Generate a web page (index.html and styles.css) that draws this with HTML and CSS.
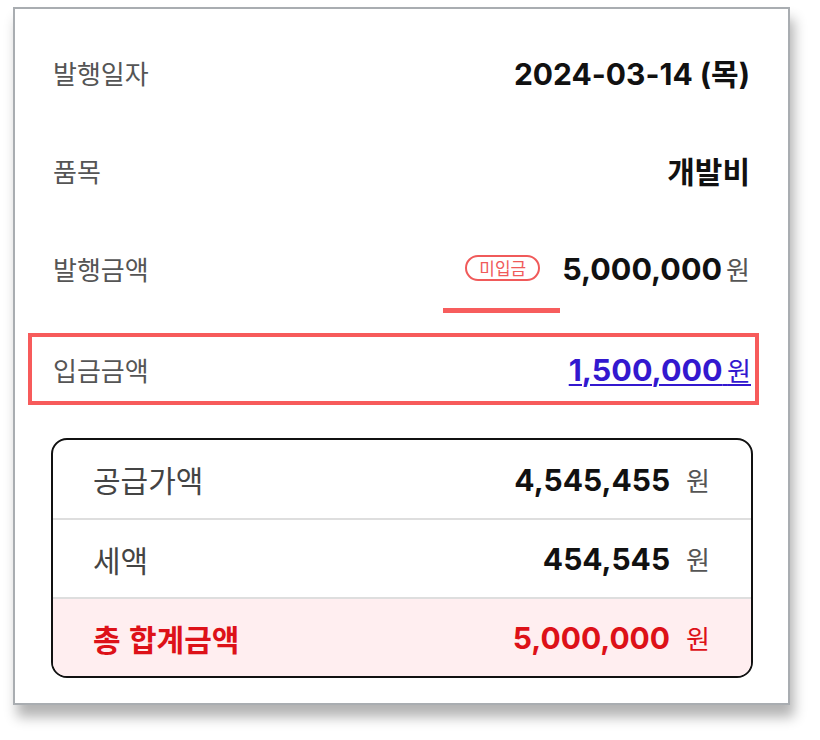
FILE: index.html
```html
<!DOCTYPE html>
<html lang="ko">
    <head>
        <meta charset="UTF-8">
        <title>세금계산서 상세</title>
        <link rel="stylesheet" href="styles.css">
    </head>
    <body>
        <main class="tarjeta">
            <div class="fila">
                <span class="etiqueta">발행일자</span>
                <span class="valor">2024-03-14 (목)</span>
            </div>
            <div class="fila">
                <span class="etiqueta">품목</span>
                <span class="valor">개발비</span>
            </div>
            <div class="fila">
                <span class="etiqueta">발행금액</span>
                <span class="monto">
                    <span class="insignia">미입금</span>
                    <span class="barra"></span>
                    <span class="numero">5,000,000</span>
                    <span class="won">원</span>
                </span>
            </div>
            <div class="fila destacada">
                <span class="etiqueta">입금금액</span>
                <a href="#" class="enlace"><span class="numero">1,500,000</span> <span class="won">원</span></a>
            </div>
            <section class="tabla">
                <div class="fila-tabla">
                    <span class="etiqueta-tabla">공급가액</span>
                    <span><span class="numero-tabla">4,545,455</span><span class="won-tabla">원</span></span>
                </div>
                <div class="fila-tabla">
                    <span class="etiqueta-tabla">세액</span>
                    <span><span class="numero-tabla">454,545</span><span class="won-tabla">원</span></span>
                </div>
                <div class="fila-tabla total">
                    <span class="etiqueta-tabla">총 합계금액</span>
                    <span><span class="numero-tabla">5,000,000</span><span class="won-tabla">원</span></span>
                </div>
            </section>
        </main>
    </body>
</html>
```
FILE: styles.css
```css
* {
    box-sizing: border-box;
}
body {
    margin: 0;
    padding: 7px 0 35px 13px;
    background: #ffffff;
    font-family: "Noto Sans CJK KR", "Noto Sans", sans-serif;
}
.tarjeta {
    width: 777px;
    height: 698px;
    border: 2px solid #a9adb1;
    background: #ffffff;
    box-shadow: 4px 12px 12px rgba(0, 0, 0, 0.3);
    padding: 14px 38px 0 38px;
}
.fila {
    display: flex;
    justify-content: space-between;
    align-items: center;
    height: 98px;
}
.etiqueta {
    font-size: 26px;
    color: #555555;
}
.valor {
    font-family: Inter, "Noto Sans CJK KR", sans-serif;
    font-size: 30px;
    font-weight: 700;
    color: #111111;
}
.monto {
    position: relative;
    display: flex;
    align-items: center;
}
.insignia {
    font-size: 17px;
    line-height: 22px;
    color: #f05a5a;
    border: 2px solid #f05a5a;
    border-radius: 13px;
    padding: 0 12px;
    margin-right: 22px;
}
.barra {
    position: absolute;
    left: -22px;
    top: 58px;
    width: 117px;
    height: 5px;
    background: #f75d5d;
}
.numero {
    font-family: Inter, sans-serif;
    font-size: 30.5px;
    font-weight: 700;
    color: #111111;
}
.won {
    font-size: 26px;
    color: #555555;
    margin-left: 4px;
}
.destacada {
    height: 72px;
    margin: 16px -9px 33px -25px;
    border: 4px solid #f75b5b;
    padding: 0 4px 0 21px;
}
.enlace {
    color: #3318cf;
    text-decoration: underline;
    text-decoration-thickness: 2px;
    text-underline-offset: 3px;
}
.enlace .numero, .enlace .won {
    color: #3318cf;
}
.enlace .won {
    margin-left: 0;
}
.tabla {
    margin: 0 -3px 0 -2px;
    border: 2px solid #111111;
    border-radius: 16px;
    overflow: hidden;
}
.fila-tabla {
    display: flex;
    justify-content: space-between;
    align-items: center;
    height: 79px;
    padding: 0 41px 0 40px;
    border-top: 2px solid #dedede;
}
.fila-tabla:first-child {
    border-top: none;
    height: 78px;
}
.etiqueta-tabla {
    font-size: 30px;
    color: #444444;
}
.numero-tabla {
    font-family: Inter, sans-serif;
    font-size: 30px;
    font-weight: 700;
    color: #111111;
}
.won-tabla {
    font-size: 26px;
    color: #555555;
    margin-left: 16px;
}
.total {
    background: #ffeef0;
}
.total .etiqueta-tabla, .total .numero-tabla, .total .won-tabla {
    color: #dd1118;
}
.total .etiqueta-tabla {
    font-weight: 700;
}
```
